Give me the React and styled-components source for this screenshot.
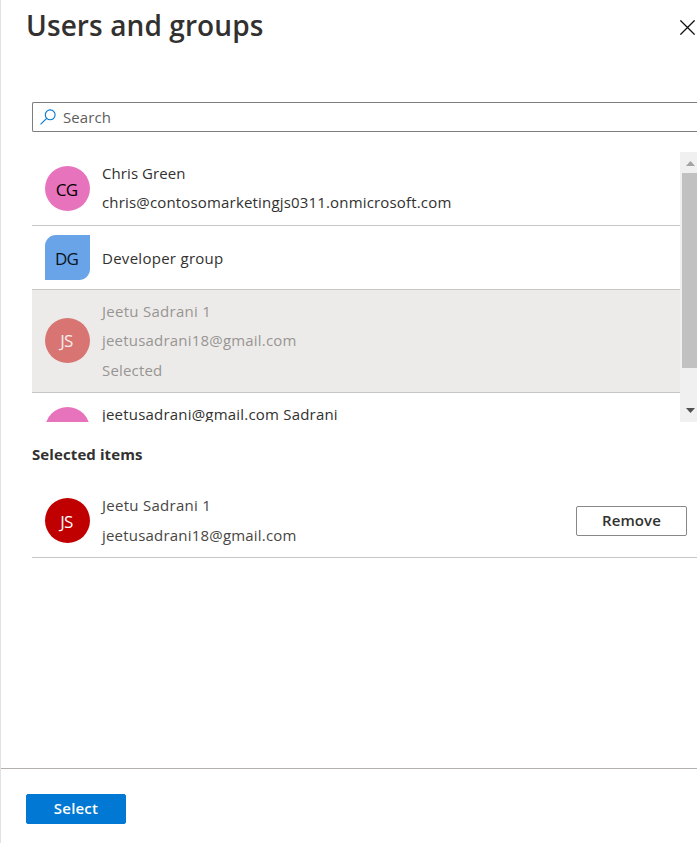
import React from "react";
import styled, { createGlobalStyle } from "styled-components";

const GlobalStyle = createGlobalStyle`
  * { box-sizing: border-box; }
  body { margin: 0; background: #fff; overflow: hidden; }
`;

const Panel = styled.main`
  position: relative;
  display: flex;
  flex-direction: column;
  width: 697px;
  height: 843px;
  overflow: hidden;
  border-left: 1px solid #e1e1e1;
  background: #fff;
  color: #323130;
  font-family: "Segoe UI", "Open Sans", "Noto Sans", sans-serif;
  font-size: 15px;
`;

const EdgeTick = styled.i`
  position: absolute;
  left: -1px;
  top: 747px;
  width: 1px;
  height: 1px;
  background: #a0a0a0;
`;

const Header = styled.header`
  display: flex;
  justify-content: space-between;
  height: 102px;
  padding: 3px 2px 0 25px;
`;

const Title = styled.h1`
  margin: 0;
  height: 44px;
  font-size: 28px;
  line-height: 44px;
  font-weight: 600;
  letter-spacing: 0.1px;
  white-space: nowrap;
`;

const CloseButton = styled.button`
  width: 15px;
  height: 15px;
  margin-top: 17px;
  padding: 0;
  border: 0;
  background: none;
  svg { display: block; }
`;

const Content = styled.section`
  flex: 1;
  padding-left: 31px;
`;

const SearchBox = styled.label`
  display: flex;
  align-items: center;
  height: 30px;
  padding-left: 7px;
  gap: 7px;
  border: 1px solid #7f7d7b;
  border-right: 0;
  border-radius: 2px 0 0 2px;
  color: #605e5c;
  letter-spacing: 0.1px;
`;

const ListFrame = styled.div`
  display: flex;
  height: 270px;
  margin-top: 20px;
  overflow: hidden;
`;

const List = styled.ul`
  flex: 1;
  margin: 0;
  padding: 0;
  list-style: none;
`;

const Row = styled.li`
  display: flex;
  align-items: ${(p) => (p.$clipped ? "flex-start" : "center")};
  height: ${(p) => p.$height}px;
  padding: 0 10px 0 13px;
  gap: 12px;
  border-bottom: ${(p) => (p.$clipped ? "0" : "1px solid #c8c6c4")};
  background: ${(p) => (p.$disabled ? "#edebe9" : "transparent")};
`;

const Avatar = styled.span`
  display: flex;
  flex: none;
  align-items: center;
  justify-content: center;
  width: 45px;
  height: 45px;
  margin-top: ${(p) => p.$top || 0}px;
  padding: 1px 2px 0 0;
  border-radius: ${(p) => (p.$group ? "11px 0 11px 0" : "50%")};
  background: ${(p) => p.$bg};
  color: ${(p) => p.$fg};
  font-size: 17px;
  letter-spacing: -0.8px;
`;

const Lines = styled.div`
  flex: 1;
  padding-top: ${(p) => p.$top || 0}px;
  padding-bottom: ${(p) => p.$bottom || 0}px;
  color: ${(p) => p.$color || "#323130"};
`;

const Line = styled.div`
  height: ${(p) => p.$height || 29.5}px;
  line-height: ${(p) => p.$height || 29.5}px;
  letter-spacing: ${(p) => p.$spacing || 0}px;
  white-space: nowrap;
`;

const Scrollbar = styled.div`
  display: flex;
  flex-direction: column;
  justify-content: space-between;
  width: 17px;
  padding: 9px 2px 9px 2px;
  background: #f0f0f0;
  svg { display: block; margin-left: 4px; }
`;

const Thumb = styled.div`
  height: 195px;
  margin: 7px 0 auto;
  width: 15px;
  background: #c1c1c1;
`;

const Subheading = styled.h2`
  margin: 22px 0 19px;
  height: 21px;
  font-size: 15px;
  line-height: 21px;
  font-weight: 700;
  letter-spacing: 0.1px;
`;

const Button = styled.button`
  height: 30px;
  width: ${(p) => (p.$primary ? 100 : 111)}px;
  padding: 0 0 ${(p) => (p.$primary ? 2 : 1)}px;
  border: 1px solid ${(p) => (p.$primary ? "#0078d4" : "#8a8886")};
  border-radius: 2px;
  background: ${(p) => (p.$primary ? "#0078d4" : "#fff")};
  color: ${(p) => (p.$primary ? "#fff" : "#323130")};
  font: 600 15px "Segoe UI", "Open Sans", "Noto Sans", sans-serif;
  letter-spacing: ${(p) => (p.$primary ? 0.2 : 0.1)}px;
`;

const Footer = styled.footer`
  height: 75px;
  padding: 25px 25px 0;
  border-top: 1px solid #b3b0ad;
`;

const people = [
  {
    initials: "CG", bg: "#e873bd", fg: "#000", height: 74, lineHeight: 29, textBottom: 2,
    lines: [["Chris Green", 0.08], ["chris@contosomarketingjs0311.onmicrosoft.com", 0.17]],
  },
  {
    initials: "DG", bg: "#69a3e8", fg: "#0a1420", height: 64, group: true, textTop: 2,
    lines: [["Developer group", 0.28]],
  },
  {
    initials: "JS", bg: "#d87573", fg: "#f7eeed", height: 103, disabled: true, avatarTop: -2,
    lines: [["Jeetu Sadrani 1", 0.27], ["jeetusadrani18@gmail.com", 0.2], ["Selected", 0.18]],
  },
  {
    initials: "", bg: "#e873bd", fg: "#000", height: 29, clipped: true, avatarTop: 14, textTop: 7,
    lines: [["jeetusadrani@gmail.com Sadrani", 0.2]],
  },
];

function PersonLines({ lines, color, lineHeight, top, bottom }) {
  return (
    <Lines $color={color} $top={top} $bottom={bottom}>
      {lines.map(([text, spacing]) => (
        <Line key={text} $spacing={spacing} $height={lineHeight}>{text}</Line>
      ))}
    </Lines>
  );
}

export default function App() {
  return (
    <>
      <GlobalStyle />
      <Panel>
        <EdgeTick />
        <Header>
          <Title>Users and groups</Title>
          <CloseButton aria-label="Close">
            <svg width="15" height="15" viewBox="0 0 15 15" stroke="#111" strokeWidth="1.3">
              <path d="M.4.4 14.6 14.6M14.6.4.4 14.6" />
            </svg>
          </CloseButton>
        </Header>
        <Content>
          <SearchBox>
            <svg width="16" height="16" viewBox="0 0 16 16" fill="none" stroke="#0078d4" strokeWidth="1.1">
              <circle cx="10.2" cy="5.8" r="4.9" />
              <path d="M6.7 9.3.5 15.3" />
            </svg>
            <span>Search</span>
          </SearchBox>
          <ListFrame>
            <List>
              {people.map((p, i) => (
                <Row key={i} $height={p.height} $disabled={p.disabled} $clipped={p.clipped}>
                  <Avatar $bg={p.bg} $fg={p.fg} $group={p.group} $top={p.avatarTop}>{p.initials}</Avatar>
                  <PersonLines
                    lines={p.lines}
                    lineHeight={p.lineHeight}
                    top={p.textTop}
                    bottom={p.textBottom}
                    color={p.disabled ? "#979593" : undefined}
                  />
                </Row>
              ))}
            </List>
            <Scrollbar>
              <svg width="9" height="5" viewBox="0 0 9 5"><path d="M0 5 4.5 0 9 5z" fill="#a3a3a3" /></svg>
              <Thumb />
              <svg width="9" height="5" viewBox="0 0 9 5"><path d="M0 0h9L4.5 5z" fill="#505050" /></svg>
            </Scrollbar>
          </ListFrame>
          <Subheading>Selected items</Subheading>
          <Row as="div" $height={74}>
            <Avatar $bg="#c00000" $fg="#fff">JS</Avatar>
            <PersonLines lines={people[2].lines.slice(0, 2)} color="#484644" />
            <Button>Remove</Button>
          </Row>
        </Content>
        <Footer>
          <Button $primary>Select</Button>
        </Footer>
      </Panel>
    </>
  );
}
